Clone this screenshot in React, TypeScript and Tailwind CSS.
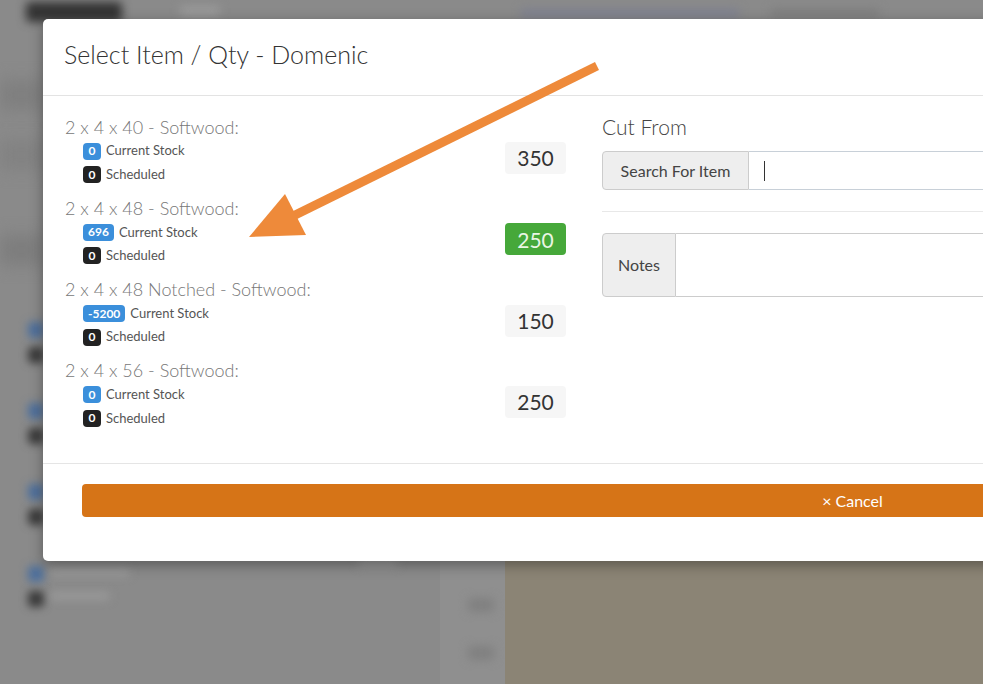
import React from "react";

type Item = {
    name: string;
    stock: string;
    scheduled: string;
    qty: string;
    active?: boolean;
};

const items: Item[] = [
    { name: "2 x 4 x 40 - Softwood:", stock: "0", scheduled: "0", qty: "350" },
    { name: "2 x 4 x 48 - Softwood:", stock: "696", scheduled: "0", qty: "250", active: true },
    { name: "2 x 4 x 48 Notched - Softwood:", stock: "-5200", scheduled: "0", qty: "150" },
    { name: "2 x 4 x 56 - Softwood:", stock: "0", scheduled: "0", qty: "250" },
];

const font = { fontFamily: "Lato, 'Noto Sans', sans-serif" };

function Backdrop() {
    return (
        <div className="absolute inset-0 overflow-hidden bg-[#8a8a8a]">
            <div className="absolute left-[505px] top-[560px] right-0 bottom-0 bg-[#8b8475]" />
            <div className="absolute left-[440px] top-[560px] w-[65px] bottom-0 bg-[#8f8f8f]" />
            <div className="absolute left-[26px] top-[2px] w-[96px] h-[20px] rounded bg-[#333] blur-[5px]" />
            <div className="absolute left-[180px] top-[6px] w-[40px] h-[10px] rounded bg-[#9a9a9a] blur-[5px]" />
            <div className="absolute left-[520px] top-[9px] w-[220px] h-[8px] rounded bg-[#7d8090] blur-[5px]" />
            <div className="absolute left-[770px] top-[9px] w-[110px] h-[8px] rounded bg-[#7d7d7d] blur-[5px]" />
            {[322, 403, 484, 566].map((y) => (
                <div key={y}>
                    <div className="absolute left-[28px] w-[16px] h-[16px] rounded bg-[#4d6f9c] blur-[4px]" style={{ top: y }} />
                    <div className="absolute left-[28px] w-[16px] h-[16px] rounded bg-[#3a3a3a] blur-[4px]" style={{ top: y + 25 }} />
                </div>
            ))}
            <div className="absolute left-[50px] top-[568px] w-[80px] h-[8px] rounded bg-[#999] blur-[4px]" />
            <div className="absolute left-[50px] top-[592px] w-[60px] h-[8px] rounded bg-[#999] blur-[4px]" />
            <div className="absolute left-[358px] top-[556px] w-[40px] h-[10px] rounded bg-[#9a9a9a] blur-[5px]" />
            <div className="absolute left-[468px] top-[598px] w-[26px] h-[14px] rounded bg-[#808080] blur-[5px]" />
            <div className="absolute left-[468px] top-[646px] w-[26px] h-[14px] rounded bg-[#808080] blur-[5px]" />
            <div className="absolute left-0 top-[80px] w-[43px] h-[30px] bg-[#7f7f7f] blur-[8px]" />
            <div className="absolute left-0 top-[140px] w-[43px] h-[30px] bg-[#828282] blur-[8px]" />
            <div className="absolute left-0 top-[235px] w-[43px] h-[30px] bg-[#7d7d7d] blur-[8px]" />
        </div>
    );
}

function Badge({ value, dark }: { value: string; dark?: boolean }) {
    return (
        <span
            className={
                "inline-flex h-[17px] min-w-[18px] items-center justify-center rounded-[4px] px-[5px] text-[12px] font-bold leading-none text-white " +
                (dark ? "bg-[#222]" : "bg-[#3b8fdb]")
            }
        >
            {value}
        </span>
    );
}

function ItemRow({ item }: { item: Item }) {
    return (
        <div className="flex h-[81.3px] justify-between">
            <div className="flex flex-col">
                <div className="flex h-[24px] items-center text-[18px] font-light text-[#777]">{item.name}</div>
                <div className="flex h-[24px] items-center gap-[5px] pl-[18px] text-[13px] text-[#555]">
                    <Badge value={item.stock} />
                    <span>Current Stock</span>
                </div>
                <div className="flex h-[23px] items-center gap-[5px] pl-[18px] text-[13px] text-[#555]">
                    <Badge value={item.scheduled} dark />
                    <span>Scheduled</span>
                </div>
            </div>
            <div
                className={
                    "mt-[27px] flex h-[32px] w-[61px] items-center justify-center rounded-[4px] text-[21px] " +
                    (item.active ? "bg-[#46a83a] text-[#eaf6e4]" : "bg-[#f6f6f6] text-[#333]")
                }
            >
                {item.qty}
            </div>
        </div>
    );
}

function Arrow() {
    return (
        <svg className="pointer-events-none absolute left-0 top-0" width="983" height="684">
            <line x1="597" y1="66" x2="285" y2="220" stroke="#ee8a3a" strokeWidth="9" />
            <polygon points="249,237 285,194 306,235" fill="#ee8a3a" />
        </svg>
    );
}

export default function App() {
    return (
        <div className="relative h-[684px] w-[983px] overflow-hidden" style={font}>
            <Backdrop />
            <div className="relative ml-[43px] mt-[19px] flex h-[542px] w-[1620px] flex-col rounded-[5px] bg-white shadow-[0_4px_14px_rgba(0,0,0,0.35)]">
                <div className="flex h-[77px] items-center border-b border-[#e3e3e3] pl-[21px] pb-[4px]">
                    <h1 className="text-[25px] font-light text-[#333]">Select Item / Qty - Domenic</h1>
                </div>
                <div className="flex h-[367px] pl-[22px] pt-[19px]">
                    <div className="flex w-[501px] flex-col">
                        {items.map((it) => (
                            <ItemRow key={it.name + it.qty} item={it} />
                        ))}
                    </div>
                    <div className="ml-[36px] flex flex-1 flex-col">
                        <div className="flex h-[24px] items-center text-[21px] font-light text-[#444]">Cut From</div>
                        <div className="mt-[12px] flex h-[39px]">
                            <div className="flex w-[147px] items-center justify-center rounded-l-[4px] border border-[#ccc] bg-[#eee] text-[16px] text-[#444]">
                                Search For Item
                            </div>
                            <div className="flex flex-1 items-center rounded-r-[4px] border border-l-0 border-[#c8d0d8] pl-[15px]">
                                <div className="h-[20px] w-[1px] bg-[#333]" />
                            </div>
                        </div>
                        <div className="mt-[21px] h-[1px] bg-[#e8e8e8]" />
                        <div className="mt-[21px] flex h-[64px]">
                            <div className="flex w-[74px] items-center justify-center rounded-l-[4px] border border-[#ccc] bg-[#eee] text-[16px] text-[#444]">
                                Notes
                            </div>
                            <div className="flex-1 rounded-r-[4px] border border-l-0 border-[#ccc]" />
                        </div>
                    </div>
                </div>
                <div className="border-t border-[#e5e5e5] pl-[39px] pr-[40px] pt-[20px]">
                    <div className="flex h-[33px] items-center justify-center rounded-[4px] bg-[#d67417] text-[16px] text-white">
                        × Cancel
                    </div>
                </div>
            </div>
            <Arrow />
        </div>
    );
}
